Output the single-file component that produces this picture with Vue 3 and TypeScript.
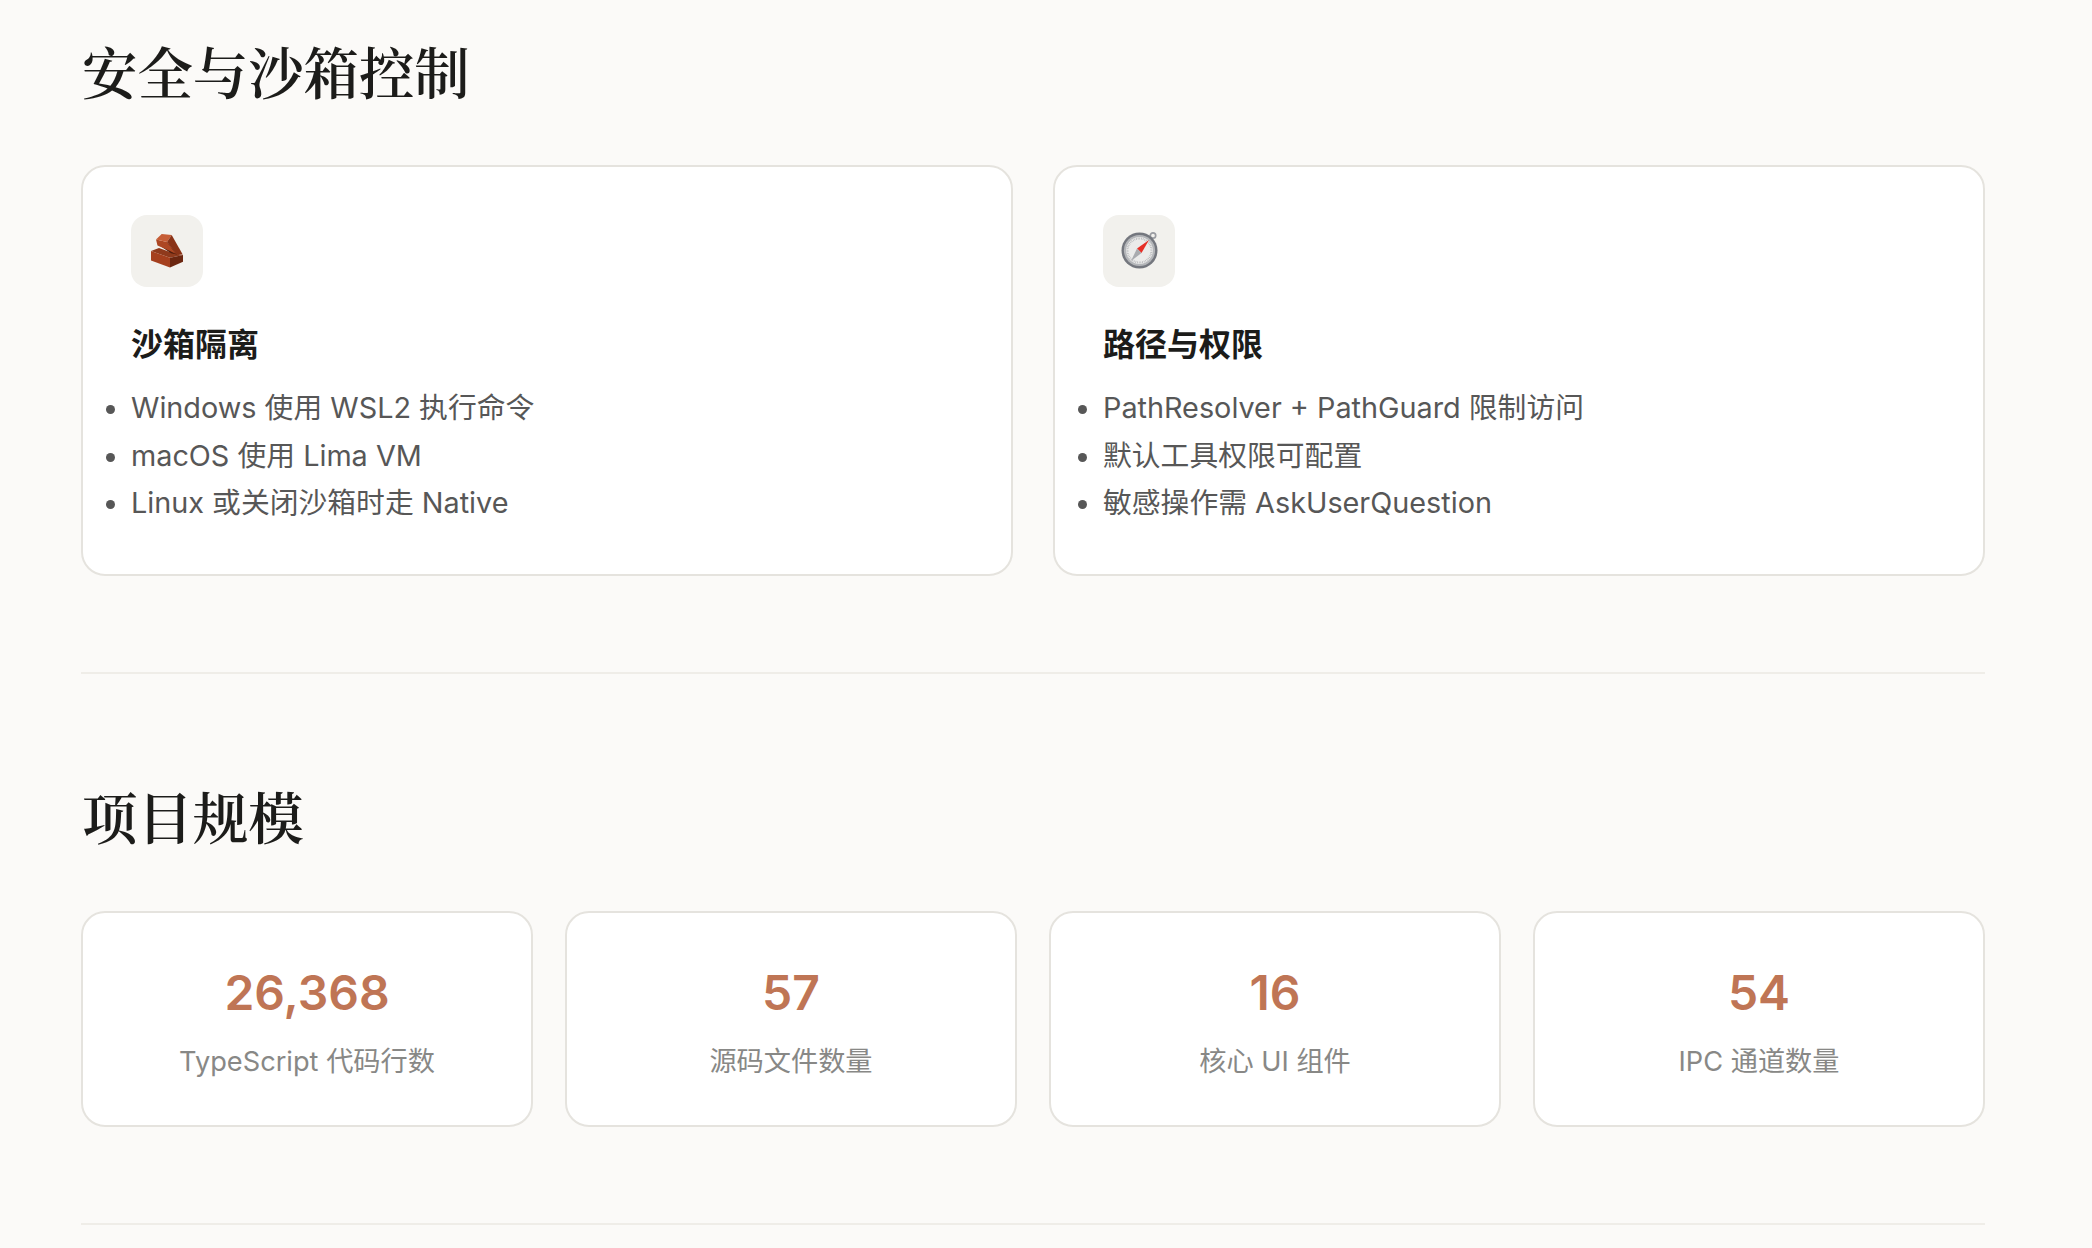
<script setup lang="ts">
interface Card { title: string; icon: string; items: string[] }
const cards: Card[] = [
  { title: '沙箱隔离', icon: 'brick', items: ['Windows 使用 WSL2 执行命令', 'macOS 使用 Lima VM', 'Linux 或关闭沙箱时走 Native'] },
  { title: '路径与权限', icon: 'compass', items: ['PathResolver + PathGuard 限制访问', '默认工具权限可配置', '敏感操作需 AskUserQuestion'] },
]
const stats = [
  { value: '26,368', label: 'TypeScript 代码行数' },
  { value: '57', label: '源码文件数量' },
  { value: '16', label: '核心 UI 组件' },
  { value: '54', label: 'IPC 通道数量' },
]
</script>

<template>
  <main class="page">
    <section class="section first">
      <h2 class="heading">安全与沙箱控制</h2>
      <div class="cards">
        <article v-for="c in cards" :key="c.title" class="card">
          <div class="icon">
            <svg v-if="c.icon === 'brick'" width="34" height="36" viewBox="0 0 34 36">
              <polygon points="1,18 9,15 20,19 33,22 20,24.8" fill="#8f3a1c" />
              <polygon points="1,18 20,24.8 20,34.6 1,27.5" fill="#a5401e" />
              <polygon points="20,24.8 33,22 33,28.7 20,34.6" fill="#6b2610" />
              <polygon points="7.5,11 17,9 27,21.5 21,20.2" fill="#4f1c0c" />
              <polygon points="6,6.5 17,9 26,21 20,18 7.5,12.5" fill="#ad4723" />
              <polygon points="6,6.5 11.7,1 21.7,2 17,9" fill="#c65d36" />
              <polygon points="17,9 21.7,2 32.7,21.5 26,21" fill="#8a3317" />
            </svg>
            <svg v-else width="42" height="42" viewBox="0 0 42 42">
              <circle cx="35" cy="5.5" r="2.7" fill="none" stroke="#9a9ca1" stroke-width="1.7" />
              <circle cx="21.5" cy="20.5" r="18" fill="#74777e" />
              <circle cx="21.5" cy="20.5" r="15.6" fill="#b4b6b9" />
              <circle cx="21.5" cy="20.5" r="13.4" fill="#ebebea" />
              <circle cx="21.5" cy="20.5" r="12" fill="none" stroke="#b2b3b6" stroke-width="2" stroke-dasharray="0.7 1" />
              <polygon points="31,10 19,18.5 23.5,23" fill="#e62f27" />
              <polygon points="13,31 19,18.5 23.5,23" fill="#a9abaf" />
            </svg>
          </div>
          <h3 class="card-title">{{ c.title }}</h3>
          <ul class="list">
            <li v-for="i in c.items" :key="i">{{ i }}</li>
          </ul>
        </article>
      </div>
    </section>
    <hr class="rule" />
    <section class="section">
      <h2 class="heading">项目规模</h2>
      <div class="stats">
        <div v-for="s in stats" :key="s.label" class="stat">
          <div class="value">{{ s.value }}</div>
          <div class="label">{{ s.label }}</div>
        </div>
      </div>
    </section>
    <hr class="rule" />
  </main>
</template>

<style>
html, body { margin: 0; background: #fbfaf8; }
</style>

<style scoped>
.page {
  box-sizing: border-box;
  width: 2092px;
  height: 1248px;
  overflow: hidden;
  padding: 0 107px 0 81px;
  background: #fbfaf8;
  font-family: Inter, "Noto Sans CJK SC", sans-serif;
}
.section { padding-top: 105px; }
.section.first { padding-top: 34px; }
.heading {
  margin: 0 0 59px 1px;
  font-family: "Noto Serif CJK SC", "Liberation Serif", "Noto Sans CJK SC", serif;
  font-size: 55.4px;
  line-height: 72px;
  font-weight: 600;
  color: #1c1c1a;
}
.cards { display: grid; grid-template-columns: 1fr 1fr; gap: 40px; }
.card {
  box-sizing: border-box;
  height: 411px;
  padding: 48px;
  background: #fff;
  border: 2px solid #e5e3de;
  border-radius: 24px;
}
.icon {
  width: 72px;
  height: 72px;
  border-radius: 16px;
  background: #f2f1ed;
  display: flex;
  align-items: center;
  justify-content: center;
}
.card-title {
  margin: 34px 0 0;
  font-size: 32px;
  line-height: 48px;
  font-weight: 600;
  color: #1c1c1a;
}
.list {
  margin: 15px 0 0;
  padding: 0;
  list-style: disc;
  font-size: 28.8px;
  line-height: 47.5px;
  color: #575757;
}
.rule {
  margin: 96px 0 0;
  border: 0;
  height: 2px;
  background: #efede8;
}
.stats {
  margin-top: 60px;
  display: grid;
  grid-template-columns: repeat(4, 1fr);
  gap: 32px;
}
.stat {
  box-sizing: border-box;
  height: 216px;
  padding: 49px 32px 0;
  background: #fff;
  border: 2px solid #e5e3de;
  border-radius: 24px;
  text-align: center;
}
.value {
  font-size: 48px;
  line-height: 62px;
  font-weight: 600;
  color: #bf7555;
}
.label {
  margin-top: 16px;
  font-size: 27.2px;
  line-height: 44px;
  color: #888886;
}
</style>
